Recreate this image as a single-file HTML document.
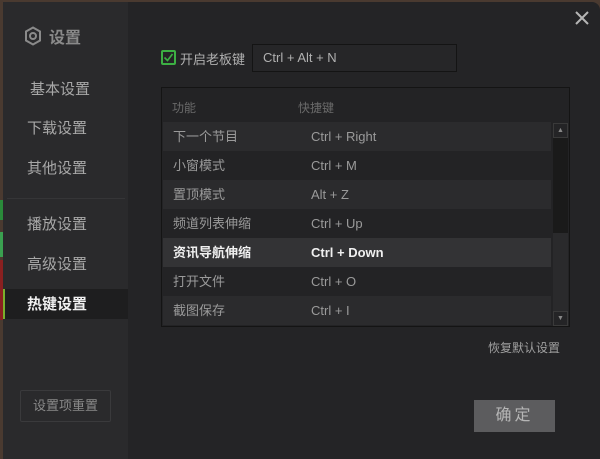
<!DOCTYPE html>
<html><head><meta charset="utf-8"><style>
*{margin:0;padding:0;box-sizing:border-box}
body{width:600px;height:459px;background:#4a3a30;font-family:"Liberation Sans","Noto Sans CJK SC",sans-serif;position:relative;overflow:hidden}
.win{position:absolute;left:3px;top:2px;width:597px;height:457px;background:#242426;border-radius:0 8px 0 0;overflow:hidden}
.side{position:absolute;left:0;top:0;width:125px;height:457px;background:#2a2a2c}
.abs{position:absolute}
.nav{position:absolute;left:24px;font-size:15px;color:#a8a8a8}
.tbl{position:absolute;left:158px;top:85px;width:409px;height:240px;border:1px solid #141414;background:#232325}
.row{position:absolute;left:1px;width:388px;height:29px;font-size:13px;color:#9a9a9a;line-height:29px}
.row span{position:absolute}
.row .a{left:10px}.row .b{left:148px}
</style></head><body>
<div class="abs" style="left:0;top:200px;width:3px;height:20px;background:#2a8a3a"></div>
<div class="abs" style="left:0;top:232px;width:3px;height:25px;background:#3aa050"></div>
<div class="abs" style="left:0;top:260px;width:3px;height:60px;background:#8a2020"></div>
<div class="win">
<div class="side">
<svg class="abs" style="left:21px;top:24px" width="18" height="20" viewBox="0 0 18 20"><path d="M9 1.5 L16 5.5 L16 14.5 L9 18.5 L2 14.5 L2 5.5 Z" fill="none" stroke="#8a8a8a" stroke-width="2"/><circle cx="9" cy="10" r="3" fill="none" stroke="#8a8a8a" stroke-width="2"/></svg>
<div class="abs" style="left:46px;top:22px;font-size:16px;color:#8a8a8a;font-weight:bold">设置</div>
<div class="nav" style="left:27px;top:76px">基本设置</div>
<div class="nav" style="top:115px">下载设置</div>
<div class="nav" style="top:155px">其他设置</div>
<div class="abs" style="left:4px;top:196px;width:118px;height:1px;background:#353537"></div>
<div class="nav" style="top:211px">播放设置</div>
<div class="nav" style="top:251px">高级设置</div>
<div class="abs" style="left:0;top:287px;width:125px;height:30px;background:#1e1e1f"></div>
<div class="abs" style="left:0;top:287px;width:2px;height:30px;background:#7ab02c"></div>
<div class="nav" style="top:291px;color:#f0f0f0;font-weight:bold">热键设置</div>
<div class="abs" style="left:17px;top:388px;width:91px;height:32px;border:1px solid #3a3a3c;border-radius:2px;color:#8a8a8a;font-size:13px;text-align:center;line-height:30px">设置项重置</div>
</div>
<svg class="abs" style="left:572px;top:9px" width="14" height="14" viewBox="0 0 14 14"><path d="M1 1 L13 13 M13 1 L1 13" stroke="#b5b5b5" stroke-width="2"/></svg>
<div class="abs" style="left:158px;top:48px;width:15px;height:15px;border:2px solid #3cb043;border-radius:2px"></div>
<svg class="abs" style="left:160px;top:50px" width="11" height="11" viewBox="0 0 11 11"><path d="M1.5 5.5 L4.5 8.5 L9.5 2" fill="none" stroke="#3cb043" stroke-width="1.6"/></svg>
<div class="abs" style="left:177px;top:47px;font-size:13px;color:#b0b0b0">开启老板键</div>
<div class="abs" style="left:249px;top:42px;width:205px;height:28px;border:1px solid #141414;background:#262628;color:#b0b0b0;font-size:13px;line-height:26px;padding-left:10px">Ctrl + Alt + N</div>
<div class="tbl">
<div class="abs" style="left:10px;top:11px;font-size:12px;color:#6a6a6a">功能</div>
<div class="abs" style="left:136px;top:11px;font-size:12px;color:#6a6a6a">快捷键</div>
<div class="row" style="top:34px;background:#2b2b2d"><span class="a">下一个节目</span><span class="b">Ctrl + Right</span></div>
<div class="row" style="top:63px"><span class="a">小窗模式</span><span class="b">Ctrl + M</span></div>
<div class="row" style="top:92px;background:#2b2b2d"><span class="a">置顶模式</span><span class="b">Alt + Z</span></div>
<div class="row" style="top:121px"><span class="a">频道列表伸缩</span><span class="b">Ctrl + Up</span></div>
<div class="row" style="top:150px;background:#333335;color:#f0f0f0;font-weight:bold"><span class="a">资讯导航伸缩</span><span class="b">Ctrl + Down</span></div>
<div class="row" style="top:179px"><span class="a">打开文件</span><span class="b">Ctrl + O</span></div>
<div class="row" style="top:208px;background:#2b2b2d"><span class="a">截图保存</span><span class="b">Ctrl + I</span></div>
<div class="abs" style="left:391px;top:35px;width:15px;height:203px;background:#1a1a1a"></div>
<div class="abs" style="left:391px;top:145px;width:15px;height:80px;background:#2a2a2c"></div>
<div class="abs" style="left:391px;top:35px;width:15px;height:15px;border:1px solid #3a3a3a;background:#242426;color:#888;font-size:7px;text-align:center;line-height:13px">▲</div>
<div class="abs" style="left:391px;top:223px;width:15px;height:15px;border:1px solid #3a3a3a;background:#242426;color:#888;font-size:7px;text-align:center;line-height:13px">▼</div>
</div>
<div class="abs" style="left:485px;top:337px;font-size:12px;color:#a0a0a0">恢复默认设置</div>
<div class="abs" style="left:471px;top:398px;width:81px;height:32px;background:#5c5c5e;color:#b5b5b5;font-size:16px;text-align:center;line-height:32px;letter-spacing:3px">确定</div>
</div>
</body></html>
